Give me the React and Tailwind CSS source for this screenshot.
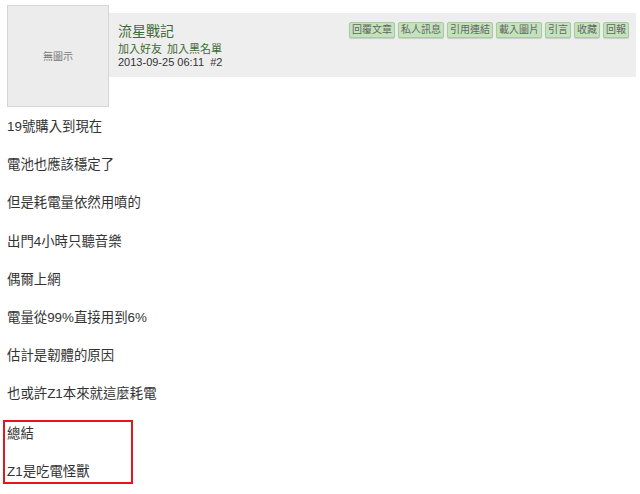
const BUTTONS = ['回覆文章', '私人訊息', '引用連結', '載入圖片', '引言', '收藏', '回報']

const LINES = [
  '19號購入到現在',
  '電池也應該穩定了',
  '但是耗電量依然用噴的',
  '出門4小時只聽音樂',
  '偶爾上網',
  '電量從99%直接用到6%',
  '估計是韌體的原因',
  '也或許Z1本來就這麼耗電',
]

const font = { fontFamily: '"Liberation Sans", "Noto Sans CJK TC", sans-serif' }

export default function App() {
  return (
    <div className="w-[640px] h-[494px] bg-white overflow-hidden text-[#333]" style={font}>
      <PostHeader />
      <div className="pt-[10px] text-[13.4px]">
        {LINES.map((line) => (
          <div key={line} className="pl-[7px] leading-[19px] mb-[19.2px]">{line}</div>
        ))}
        <div className="-mt-[3px] ml-[3px] w-[130px] border-2 border-[#e3161b] pl-[2px] pt-[2px]">
          <div className="leading-[19px] mb-[19.2px]">總結</div>
          <div className="leading-[19px] pb-[1px]">Z1是吃電怪獸</div>
        </div>
      </div>
    </div>
  )
}

function PostHeader() {
  return (
    <div className="flex items-start">
      <div className="ml-[7px] mt-[5px] w-[102px] h-[102px] shrink-0 bg-[#ececec] border border-[#d6d6d6] flex items-center justify-center text-[10px] text-[#777]">
        無圖示
      </div>
      <div className="mt-[13px] mr-[4px] flex-1 h-[64px] bg-[#eeeeee] flex justify-between pl-[9px] pr-[7px]">
        <div className="pt-[9px]">
          <div className="text-[14px] leading-[18px] text-[#3d6b35]">流星戰記</div>
          <div className="mt-[3px] text-[11px] leading-[13px] text-[#3d6b35] flex gap-[5px]">
            <span>加入好友</span>
            <span>加入黑名單</span>
          </div>
          <div className="text-[11px] leading-[13px] text-[#333]">2013-09-25 06:11&nbsp;&nbsp;#2</div>
        </div>
        <div className="pt-[9px] flex gap-[3px] items-start">
          {BUTTONS.map((b) => (
            <button
              key={b}
              className="h-[16px] px-[2px] text-[10px] leading-[14px] text-[#666] bg-[#c3e2bd] border border-[#a4cc9d] rounded-[2px] shadow-[0_1px_1px_rgba(0,0,0,0.15)]"
            >
              {b}
            </button>
          ))}
        </div>
      </div>
    </div>
  )
}
